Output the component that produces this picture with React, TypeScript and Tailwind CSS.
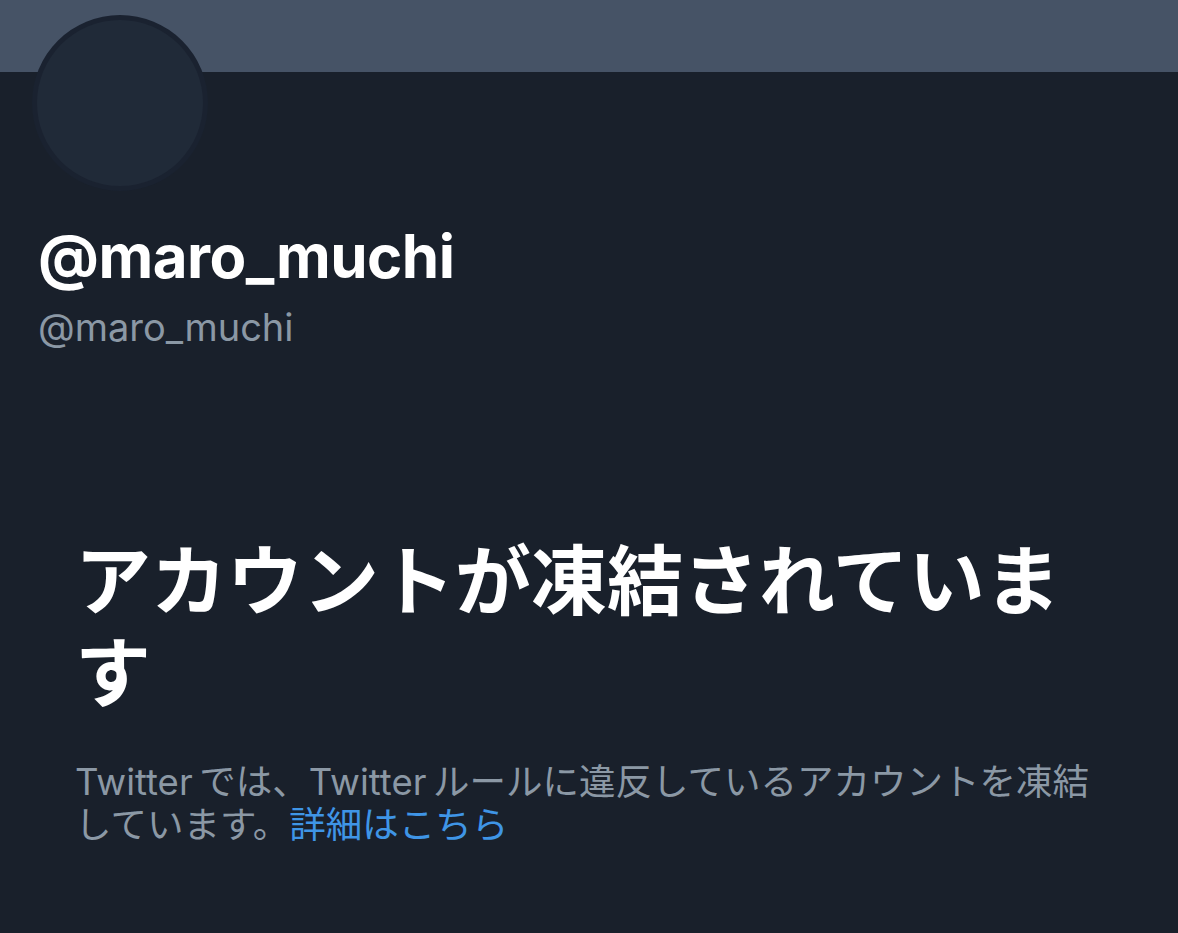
import React, { FunctionComponent } from 'react'

const App: FunctionComponent = () => {
	return <div className="w-[1178px] h-[933px] bg-[#19202b] overflow-hidden" style={ { fontFamily: 'Inter, "Noto Sans CJK JP", sans-serif' } }>
		<div className="h-[72px] bg-[#465366]"></div>
		<div className="ml-[32px] -mt-[57px] w-[176px] h-[176px] rounded-full bg-[#1a2230] p-[5px]">
			<div className="w-full h-full rounded-full bg-[#202a38]"></div>
		</div>
		<div className="px-[38px] mt-[31px]">
			<div className="text-[60px] leading-[68px] font-bold text-white tracking-[-0.5px]">@maro_muchi</div>
			<div className="text-[38px] leading-[46px] text-[#8b98a5] mt-[14px]">@maro_muchi</div>
		</div>
		<div className="px-[75px] mt-[185px]">
			<h1 className="text-[76px] leading-[92px] font-bold text-white">アカウントが凍結されています</h1>
			<p className="mt-[42px] text-[36.5px] leading-[43px] text-[#8b98a5]">
				{ 'Twitter\u2009では、Twitter\u2009ルールに違反しているアカウントを凍結しています。' }<a className="text-[#3f95e6]">詳細はこちら</a>
			</p>
		</div>
	</div>;
};

export default App;
